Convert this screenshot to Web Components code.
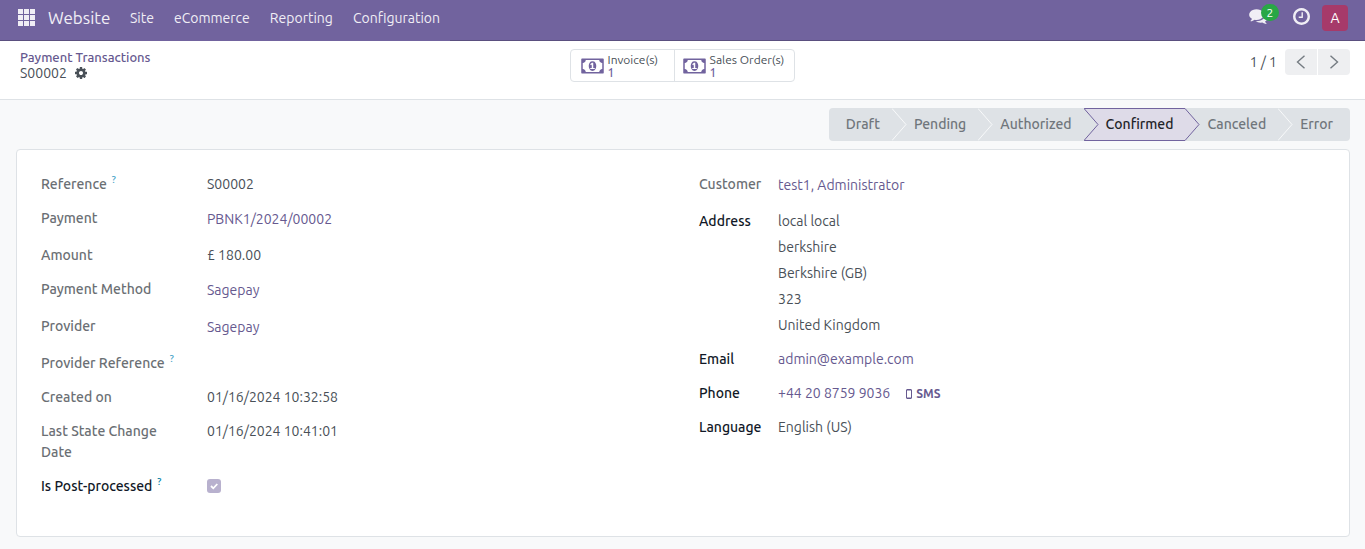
<!DOCTYPE html>
<html lang="en">
<head>
<meta charset="utf-8">
<title>S00002 - Payment Transactions</title>
<style>
  html { height: 100%; }
  body {
    margin: 0; min-height: 100%; background: #f8f9fa; color: #495057;
    font: 14px/21px "Ubuntu", "Noto Sans", sans-serif;
    --brand: #71639e; --link: #66598f; --line: #dee2e6;
  }
</style>
</head>
<body>
<payment-page></payment-page>
<script>
const define = (name, html, setup) => {
  const template = document.createElement('template');
  template.innerHTML = html;
  customElements.define(name, class extends HTMLElement {
    constructor() {
      super();
      this.attachShadow({ mode: 'open' }).append(template.content.cloneNode(true));
    }
    connectedCallback() { if (setup) setup(this, this.shadowRoot); }
  });
};

/* Glyphs are in font units, y pointing up: [width, path] */
const GLYPHS = {
  gear: [1536, 'M1024 640q0 106 -75 181t-181 75t-181 -75t-75 -181t75 -181t181 -75t181 75t75 181zM1536 749v-222q0 -12 -8 -23t-20 -13l-185 -28q-19 -54 -39 -91q35 -50 107 -138q10 -12 10 -25t-9 -23q-27 -37 -99 -108t-94 -71q-12 0 -26 9l-138 108q-44 -23 -91 -38q-16 -136 -29 -186q-7 -28 -36 -28h-222q-14 0 -24.5 8.5t-11.5 21.5l-28 184q-49 16 -90 37l-141 -107q-10 -9 -25 -9q-14 0 -25 11q-126 114 -165 168q-7 10 -7 23q0 12 8 23q15 21 51 66.5t54 70.5q-27 50 -41 99l-183 27q-13 2 -21 12.5t-8 23.5v222q0 12 8 23t19 13l186 28q14 46 39 92q-40 57 -107 138q-10 12 -10 24q0 10 9 23q26 36 98.5 107.5t94.5 71.5q13 0 26 -10l138 -107q44 23 91 38q16 136 29 186q7 28 36 28h222q14 0 24.5 -8.5t11.5 -21.5l28 -184q49 -16 90 -37l142 107q9 9 24 9q13 0 25 -10q129 -119 165 -170q7 -8 7 -22q0 -12 -8 -23q-15 -21 -51 -66.5t-54 -70.5q26 -50 41 -98l183 -28q13 -2 21 -12.5t8 -23.5z'],
  money: [1920, 'M768 384h384v96h-128v448h-114l-148 -137l77 -80q42 37 55 57h2v-288h-128v-96zM1280 640q0 -70 -21 -142t-59.5 -134t-101.5 -101t-138 -39t-138 39t-101.5 101t-59.5 134t-21 142t21 142t59.5 134t101.5 101t138 39t138 -39t101.5 -101t59.5 -134t21 -142zM1792 384v512q-106 0 -181 75t-75 181h-1152q0 -106 -75 -181t-181 -75v-512q106 0 181 -75t75 -181h1152q0 106 75 181t181 75zM1920 1216v-1152q0 -26 -19 -45t-45 -19h-1792q-26 0 -45 19t-19 45v1152q0 26 19 45t45 19h1792q26 0 45 -19t19 -45z'],
  comments: [1792, 'M1408 768q0 -139 -94 -257t-256.5 -186.5t-353.5 -68.5q-86 0 -176 16q-124 -88 -278 -128q-36 -9 -86 -16h-3q-11 0 -20.5 8t-11.5 21q-1 3 -1 6.5t0.5 6.5t2 6l2.5 5t3.5 5.5t4 5t4.5 5t4 4.5q5 6 23 25t26 29.5t22.5 29t25 38.5t20.5 44q-124 72 -195 177t-71 224q0 139 94 257t256.5 186.5t353.5 68.5t353.5 -68.5t256.5 -186.5t94 -257zM1792 512q0 -120 -71 -224.5t-195 -176.5q10 -24 20.5 -44t25 -38.5t22.5 -29t26 -29.5t23 -25q1 -1 4 -4.5t4.5 -5t4 -5t3.5 -5.5l2.5 -5t2 -6t0.5 -6.5t-1 -6.5q-3 -14 -13 -22t-22 -7q-50 7 -86 16q-154 40 -278 128q-90 -16 -176 -16q-271 0 -472 132q58 -4 88 -4q161 0 309 45t264 129q125 92 192 212t67 254q0 77 -23 152q129 -71 204 -178t75 -230z'],
  clock: [1536, 'M896 992v-448q0 -14 -9 -23t-23 -9h-320q-14 0 -23 9t-9 23v64q0 14 9 23t23 9h224v352q0 14 9 23t23 9h64q14 0 23 -9t9 -23zM1312 640q0 148 -73 273t-198 198t-273 73t-273 -73t-198 -198t-73 -273t73 -273t198 -198t273 -73t273 73t198 198t73 273zM1536 640q0 -209 -103 -385.5t-279.5 -279.5t-385.5 -103t-385.5 103t-279.5 279.5t-103 385.5t103 385.5t279.5 279.5t385.5 103t385.5 -103t279.5 -279.5t103 -385.5z']
};
define('font-icon', `
  <style>
    :host { display: inline-flex; }
    svg { display: block; fill: currentColor; }
  </style>
  <svg aria-hidden="true"><path transform="scale(1 -1)"/></svg>
`, (el, root) => {
  const [width, d] = GLYPHS[el.getAttribute('name')];
  const size = Number(el.getAttribute('size'));
  const svg = root.querySelector('svg');
  svg.setAttribute('viewBox', `0 -1408 ${width} 1536`);
  svg.setAttribute('height', size);
  svg.setAttribute('width', Math.round(size * width / 1536));
  root.querySelector('path').setAttribute('d', d);
});

define('app-navbar', `
  <style>
    :host { display: flex; height: 41px; background: var(--brand); color: #f0eef5; box-shadow: inset 0 -1px #5a4f7f; }
    a { color: inherit; text-decoration: none; }
    button { border: 0; padding: 0; background: none; color: inherit; font: inherit; }
    .apps { width: 48px; padding-left: 18px; height: 35px; display: flex; align-items: center; }
    .apps svg { fill: currentColor; }
    .brand { font-size: 17px; line-height: 36px; width: 72px; }
    nav { display: flex; gap: 20px; padding: 0 10px; line-height: 36px; background: var(--brand); }
    .tray { margin-left: auto; display: flex; align-items: flex-start; padding: 5px 17px 0 0; }
    .tray button { display: flex; align-items: center; position: relative; }
    .chat { height: 22px; width: 44px; }
    .clock { height: 23px; width: 29px; }
    .badge { position: absolute; left: 12px; top: -1px; min-width: 18px; height: 17px; border-radius: 9px; background: #28a745; color: #fff; font-size: 12px; line-height: 17px; text-align: center; }
    .tray .avatar { width: 26px; height: 26px; border-radius: 4px; background: #a63a6a; justify-content: center; color: #fff; }
  </style>
  <button class="apps" aria-label="Apps">
    <svg width="17" height="17" viewBox="0 0 17 17" aria-hidden="true">
      <path d="M0 0h5v5H0zM6 0h5v5H6zM12 0h5v5h-5zM0 6h5v5H0zM6 6h5v5H6zM12 6h5v5h-5zM0 12h5v5H0zM6 12h5v5H6zM12 12h5v5h-5z"/>
    </svg>
  </button>
  <a class="brand" href="#">Website</a>
  <nav><a href="#">Site</a><a href="#">eCommerce</a><a href="#">Reporting</a><a href="#">Configuration</a></nav>
  <div class="tray">
    <button class="chat" aria-label="Messages"><font-icon name="comments" size="16"></font-icon><span class="badge">2</span></button>
    <button class="clock" aria-label="Activities"><font-icon name="clock" size="17"></font-icon></button>
    <button class="avatar">A</button>
  </div>
`);

define('stat-button', `
  <style>
    :host { display: block; min-width: 103px; }
    :host(:not(:first-child)) { border-left: 1px solid var(--line); }
    button { display: flex; align-items: center; gap: 4px; height: 31px; padding: 0 10px 0 8px; border: 0; background: none;
      font: inherit; font-size: 12px; line-height: 13px; color: #495057; text-align: left; }
    :host(:first-child) button { padding-left: 10px; }
    font-icon, .count { color: var(--brand); }
    span { display: block; }
    .count { font-weight: 500; }
  </style>
  <button><font-icon name="money" size="18"></font-icon><span><slot></slot><span class="count"></span></span></button>
`, (el, root) => { root.querySelector('.count').textContent = el.getAttribute('count'); });

define('record-pager', `
  <style>
    :host { display: flex; align-items: center; height: 26px; justify-content: flex-end; }
    span { margin-right: 8px; }
    button { width: 32px; height: 26px; padding: 0; border: 0; background: #eeeff1; display: flex; align-items: center; justify-content: center; }
    button:first-of-type { border-radius: 4px 0 0 4px; margin-right: 1px; }
    button:last-of-type { border-radius: 0 4px 4px 0; }
    svg { fill: none; stroke: #747b82; stroke-width: 1.4; }
  </style>
  <span>1 / 1</span>
  <button aria-label="Previous"><svg width="10" height="14" viewBox="0 0 10 14"><path d="M8.500 .7 1.500 7l7 6.300"/></svg></button>
  <button aria-label="Next"><svg width="10" height="14" viewBox="0 0 10 14"><path d="M1.500 .7 8.500 7l-7 6.300"/></svg></button>
`);

define('control-panel', `
  <style>
    :host { display: grid; grid-template-columns: 1fr auto 1fr; align-items: start; box-sizing: border-box; height: 59px;
      padding: 8px 15px 0; background: #fff; border-bottom: 1px solid var(--line); }
    .crumbs { padding-left: 5px; line-height: 16px; }
    .crumbs a { display: block; color: var(--link); font-size: 13px; font-weight: 500; text-decoration: none; }
    .crumbs div { display: flex; align-items: center; gap: 8px; }
    .crumbs button { border: 0; padding: 0; background: none; color: #495057; display: flex; }
    .stats { display: flex; border: 1px solid var(--line); border-radius: 4px; }
  </style>
  <div class="crumbs">
    <a href="#">Payment Transactions</a>
    <div>S00002 <button aria-label="Actions"><font-icon name="gear" size="12"></font-icon></button></div>
  </div>
  <div class="stats"><stat-button count="1">Invoice(s)</stat-button><stat-button count="1">Sales Order(s)</stat-button></div>
  <record-pager></record-pager>
`);

define('status-step', `
  <style>
    :host { display: block; position: relative; }
    button { display: block; height: 33px; padding: 0 12px 0 22px; border: 0; background: #dee2e6; color: #70767c;
      font: inherit; font-weight: 500; line-height: 33px; white-space: nowrap; }
    svg { position: absolute; left: 100%; top: 0; z-index: 1; fill: #dee2e6; stroke: #f8f9fa; }
    :host(:first-child) button { padding-left: 17px; border-radius: 4px 0 0 4px; }
    :host(:last-child) button { padding-right: 17px; border-radius: 0 4px 4px 0; }
    :host(:last-child) svg { display: none; }
    :host([active]) button { background: #dedbe8; color: #1f2429; box-shadow: inset 0 1px var(--brand), inset 0 -1px var(--brand); }
    :host([active]) svg { fill: #dedbe8; stroke: var(--brand); }
    :host([before-active]) svg { stroke: var(--brand); }
  </style>
  <button><slot></slot></button>
  <svg width="15" height="33" viewBox="0 0 15 33" aria-hidden="true"><path d="M0 .5 14 16.500 0 32.500"/></svg>
`);

define('form-field', `
  <style>
    :host { display: grid; grid-template-columns: var(--label-width) 1fr; column-gap: var(--label-gap); margin-bottom: 13px; align-items: start; }
    .label { font-weight: 500; color: #6b6f74; }
    :host([strong]) .label { color: #111827; }
    sup { color: #4ba5c8; font-size: 10px; line-height: 1; vertical-align: 6px; margin-left: 5px; display: none; }
    :host([help]) sup { display: inline; }
    .value { min-height: 21px; }
    ::slotted(a) { color: var(--link); text-decoration: none; }
    ::slotted(a.record) { display: block; line-height: 22px; padding-bottom: 2px; }
    ::slotted(address) { font-style: normal; line-height: 26px; margin: -3px 0 -2px; }
  </style>
  <div class="label"><span></span><sup>?</sup></div>
  <div class="value"><slot></slot></div>
`, (el, root) => { root.querySelector('.label span').textContent = el.getAttribute('label'); });

define('check-field', `
  <style>
    :host { display: grid; grid-template-columns: var(--label-width) 1fr; column-gap: var(--label-gap); align-items: start; margin-bottom: 13px; }
    label { font-weight: 500; color: #111827; }
    sup { color: #0180a5; font-size: 10px; line-height: 1; vertical-align: 6px; margin-left: 5px; }
    input { appearance: none; display: block; margin: 3px 0 0; width: 14px; height: 14px; border-radius: 3px;
      background: #b8b1ce url("data:image/svg+xml,%3Csvg xmlns='http://www.w3.org/2000/svg' viewBox='0 0 14 14'%3E%3Cpath d='M4 7l2.300 2.300L10.300 5' fill='none' stroke='%23fff' stroke-width='1.800'/%3E%3C/svg%3E"); }
  </style>
  <label for="box"><slot></slot><sup>?</sup></label>
  <input id="box" type="checkbox" checked disabled>
`);

define('phone-number', `
  <style>
    :host { display: flex; align-items: center; }
    a { color: var(--link); text-decoration: none; }
    .sms { display: flex; align-items: center; gap: 4px; margin-left: 16px; font-size: 12px; font-weight: 600; }
    svg { fill: none; stroke: currentColor; }
  </style>
  <a href="tel:+442087599036">+44 20 8759 9036</a>
  <a class="sms" href="#"><svg width="6" height="10" viewBox="0 0 6 10" aria-hidden="true"><rect x=".5" y=".5" width="5" height="9" rx=".5"/><path d="M1 1.500h4M1 8.500h4" stroke-opacity=".5"/></svg>SMS</a>
`);

define('form-sheet', `
  <style>
    :host { display: grid; grid-template-columns: 1fr 1fr; column-gap: 32px; margin: 8px 15px 12px 16px; padding: 24px 24px 26px;
      background: #fff; border: 1px solid var(--line); border-radius: 4px; }
    .left { --label-width: 140px; --label-gap: 26px; }
    .right { --label-width: 63px; --label-gap: 16px; }
  </style>
  <div class="left">
    <form-field label="Reference" help>S00002</form-field>
    <form-field label="Payment"><a class="record" href="#">PBNK1/2024/00002</a></form-field>
    <form-field label="Amount">£ 180.00</form-field>
    <form-field label="Payment Method"><a class="record" href="#">Sagepay</a></form-field>
    <form-field label="Provider"><a class="record" href="#">Sagepay</a></form-field>
    <form-field label="Provider Reference" help></form-field>
    <form-field label="Created on">01/16/2024 10:32:58</form-field>
    <form-field label="Last State Change Date">01/16/2024 10:41:01</form-field>
    <check-field>Is Post-processed</check-field>
  </div>
  <div class="right">
    <form-field label="Customer"><a class="record" href="#">test1, Administrator</a></form-field>
    <form-field label="Address" strong><address>local local<br>berkshire<br>Berkshire (GB)<br>323<br>United Kingdom</address></form-field>
    <form-field label="Email" strong><a href="mailto:admin@example.com">admin@example.com</a></form-field>
    <form-field label="Phone" strong><phone-number></phone-number></form-field>
    <form-field label="Language" strong>English (US)</form-field>
  </div>
`);

define('payment-page', `
  <style>
    :host { display: block; }
    .status { display: flex; justify-content: flex-end; padding: 8px 15px 0; }
  </style>
  <app-navbar></app-navbar>
  <control-panel></control-panel>
  <main>
    <div class="status">
      <status-step>Draft</status-step>
      <status-step>Pending</status-step>
      <status-step before-active>Authorized</status-step>
      <status-step active>Confirmed</status-step>
      <status-step>Canceled</status-step>
      <status-step>Error</status-step>
    </div>
    <form-sheet></form-sheet>
  </main>
`);
</script>
</body>
</html>
